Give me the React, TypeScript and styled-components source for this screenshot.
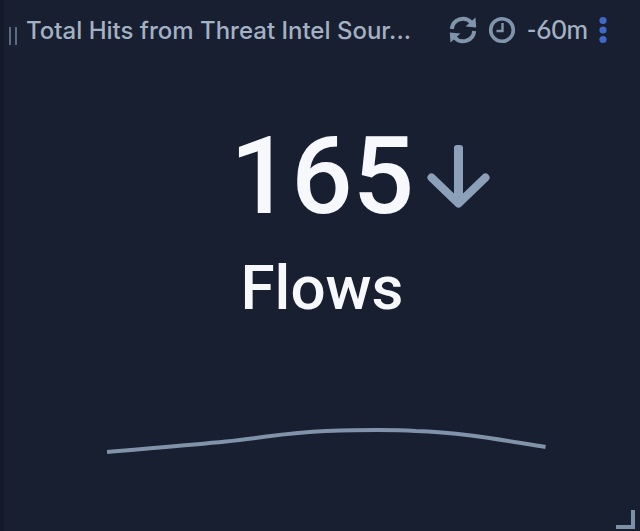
import React from "react";
import styled, { createGlobalStyle } from "styled-components";

const GlobalStyle = createGlobalStyle`
  * { box-sizing: border-box; }
  html, body { margin: 0; background: #181f30; }
`;

const Panel = styled.section`
  position: relative;
  display: flex;
  flex-direction: column;
  min-height: 100vh;
  border-left: 4px solid #141a29;
  background: #181f30;
  color: #f7f8fc;
  font-family: Roboto, "Liberation Sans", sans-serif;
`;

const Header = styled.header`
  display: flex;
  align-items: center;
  height: 60px;
  padding: 0 33px 0 5px;
  color: #a3b1c4;
`;

const DragHandle = styled.button`
  width: 8px;
  height: 18px;
  margin: 12px 9px 0 0;
  padding: 0;
  border: solid #5a6a7f;
  border-width: 0 2px;
  background: none;
  cursor: grab;
`;

const Title = styled.h2`
  flex: 1;
  min-width: 0;
  margin: 0;
  padding-top: 2px;
  overflow: hidden;
  white-space: nowrap;
  font: 500 24px/32px Inter, "Liberation Sans", sans-serif;
`;

const Actions = styled.div`
  display: flex;
  align-items: center;
  gap: 11px;
`;

const IconButton = styled.button<{ $tone?: string }>`
  display: flex;
  padding: 0;
  border: 0;
  background: none;
  color: ${(p) => p.$tone ?? "#7f95ab"};
  cursor: pointer;
`;

const Range = styled.span`
  padding-bottom: 2px;
  font: 500 26px/32px Lato, sans-serif;
`;

const Metric = styled.div`
  display: grid;
  grid-template-columns: 1fr auto 1fr;
  align-items: center;
  margin-top: 52px;
`;

const Value = styled.strong`
  grid-column: 2;
  font-size: 108px;
  line-height: 128px;
  font-weight: 500;
`;

const Trend = styled.svg`
  margin: 2px 0 0 13px;
`;

const Unit = styled.p`
  margin: 10px 0 0;
  text-align: center;
  font-size: 62px;
  line-height: 76px;
  font-weight: 500;
`;

const Chart = styled.div`
  margin-top: 99px;
  padding-left: 8px;
`;

const Sparkline = styled.svg`
  display: block;
  width: 70%;
  margin: 0 auto;
  overflow: visible;
`;

const ResizeGrip = styled.span`
  position: absolute;
  right: 5px;
  bottom: 2px;
  width: 19px;
  height: 19px;
  border: solid #7c91a5;
  border-width: 0 4px 4px 0;
  cursor: nwse-resize;
`;

const RefreshIcon = () => (
  <svg width="28" height="28" viewBox="0 0 28 28" aria-hidden="true">
    <g fill="none" stroke="currentColor" strokeWidth="4">
      <path d="M2.800 13A11.200 11.200 0 0 1 22.300 6.500" />
      <path d="M25.200 15A11.200 11.200 0 0 1 5.700 21.500" />
    </g>
    <path fill="currentColor" d="M26.500 1.500L27.200 11.500L16.500 10.500ZM1.500 26.500L0.800 16.500L11.500 17.500Z" />
  </svg>
);

const ClockIcon = () => (
  <svg width="28" height="28" viewBox="0 0 28 28" fill="none" stroke="currentColor" aria-hidden="true">
    <circle cx="14" cy="14" r="11.3" strokeWidth="3.6" />
    <path d="M14.5 7V15H8.5" strokeWidth="2.4" />
  </svg>
);

const MoreIcon = () => (
  <svg width="8" height="28" viewBox="0 0 8 28" fill="currentColor" aria-hidden="true">
    <circle cx="4" cy="4.5" r="3.6" />
    <circle cx="4" cy="14" r="3.6" />
    <circle cx="4" cy="23.5" r="3.6" />
  </svg>
);

export default function App() {
  return (
    <Panel>
      <GlobalStyle />
      <Header>
        <DragHandle aria-label="Move panel" />
        <Title>Total Hits from Threat Intel Sour...</Title>
        <Actions>
          <IconButton aria-label="Refresh"><RefreshIcon /></IconButton>
          <IconButton aria-label="Time range"><ClockIcon /></IconButton>
          <Range>-60m</Range>
          <IconButton $tone="#4068c8" aria-label="More options"><MoreIcon /></IconButton>
        </Actions>
      </Header>
      <Metric>
        <Value>165</Value>
        <Trend width="64" height="64" viewBox="0 0 64 64" role="img" aria-label="Decreasing">
          <g fill="none" stroke="#8ca1b9">
            <path d="M31.5 2V54" strokeWidth="9" />
            <path d="M30 3H33" strokeWidth="6" strokeLinecap="round" />
            <path d="M4.500 32.500L31.500 58.500L58.500 32.500" strokeWidth="8" strokeLinecap="round" strokeLinejoin="round" />
          </g>
        </Trend>
      </Metric>
      <Unit>Flows</Unit>
      <Chart>
        <Sparkline viewBox="0 0 440 28" fill="none" role="img" aria-label="Flows over the last 60 minutes">
          <path d="M1 27C40 23.500 80 20.500 120 16.500C160 12.500 180 7.500 220 6C250 5 280 4 310 6C350 7 390 14 440 22" stroke="#8093aa" strokeWidth="4" />
        </Sparkline>
      </Chart>
      <ResizeGrip />
    </Panel>
  );
}
